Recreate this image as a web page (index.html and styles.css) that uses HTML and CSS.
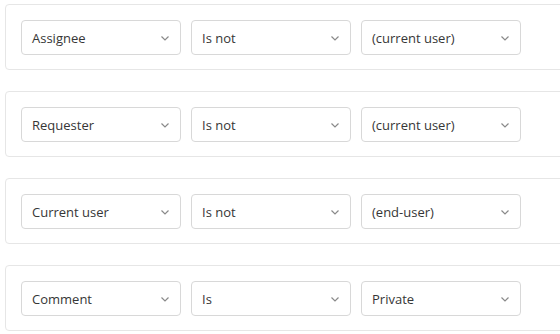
FILE: index.html
```html
<!DOCTYPE html>
<html>
<head>
<meta charset="utf-8">
<link rel="stylesheet" href="styles.css">
</head>
<body>
<div class="list">
  <div class="card">
    <div class="select"><span>Assignee</span><svg class="chev" width="8" height="5" viewBox="0 0 8 5"><path d="M0.5 0.5 L4 4 L7.5 0.5" fill="none" stroke="#8a8a8a" stroke-width="1.2"/></svg></div>
    <div class="select"><span>Is not</span><svg class="chev" width="8" height="5" viewBox="0 0 8 5"><path d="M0.5 0.5 L4 4 L7.5 0.5" fill="none" stroke="#8a8a8a" stroke-width="1.2"/></svg></div>
    <div class="select"><span>(current user)</span><svg class="chev" width="8" height="5" viewBox="0 0 8 5"><path d="M0.5 0.5 L4 4 L7.5 0.5" fill="none" stroke="#8a8a8a" stroke-width="1.2"/></svg></div>
  </div>
  <div class="card">
    <div class="select"><span>Requester</span><svg class="chev" width="8" height="5" viewBox="0 0 8 5"><path d="M0.5 0.5 L4 4 L7.5 0.5" fill="none" stroke="#8a8a8a" stroke-width="1.2"/></svg></div>
    <div class="select"><span>Is not</span><svg class="chev" width="8" height="5" viewBox="0 0 8 5"><path d="M0.5 0.5 L4 4 L7.5 0.5" fill="none" stroke="#8a8a8a" stroke-width="1.2"/></svg></div>
    <div class="select"><span>(current user)</span><svg class="chev" width="8" height="5" viewBox="0 0 8 5"><path d="M0.5 0.5 L4 4 L7.5 0.5" fill="none" stroke="#8a8a8a" stroke-width="1.2"/></svg></div>
  </div>
  <div class="card">
    <div class="select"><span>Current user</span><svg class="chev" width="8" height="5" viewBox="0 0 8 5"><path d="M0.5 0.5 L4 4 L7.5 0.5" fill="none" stroke="#8a8a8a" stroke-width="1.2"/></svg></div>
    <div class="select"><span>Is not</span><svg class="chev" width="8" height="5" viewBox="0 0 8 5"><path d="M0.5 0.5 L4 4 L7.5 0.5" fill="none" stroke="#8a8a8a" stroke-width="1.2"/></svg></div>
    <div class="select"><span>(end-user)</span><svg class="chev" width="8" height="5" viewBox="0 0 8 5"><path d="M0.5 0.5 L4 4 L7.5 0.5" fill="none" stroke="#8a8a8a" stroke-width="1.2"/></svg></div>
  </div>
  <div class="card">
    <div class="select"><span>Comment</span><svg class="chev" width="8" height="5" viewBox="0 0 8 5"><path d="M0.5 0.5 L4 4 L7.5 0.5" fill="none" stroke="#8a8a8a" stroke-width="1.2"/></svg></div>
    <div class="select"><span>Is</span><svg class="chev" width="8" height="5" viewBox="0 0 8 5"><path d="M0.5 0.5 L4 4 L7.5 0.5" fill="none" stroke="#8a8a8a" stroke-width="1.2"/></svg></div>
    <div class="select"><span>Private</span><svg class="chev" width="8" height="5" viewBox="0 0 8 5"><path d="M0.5 0.5 L4 4 L7.5 0.5" fill="none" stroke="#8a8a8a" stroke-width="1.2"/></svg></div>
  </div>
</div>
</body>
</html>
```
FILE: styles.css
```css
html, body {
  margin: 0;
  padding: 0;
  background: #fff;
  overflow: hidden;
}
body {
  width: 560px;
  font-family: "Open Sans", "Noto Sans", sans-serif;
  font-size: 13px;
  color: #363636;
}
.list {
  display: flex;
  flex-direction: column;
  gap: 21px;
  padding: 4px 0 0 5px;
  overflow: hidden;
}
.card {
  display: flex;
  gap: 10px;
  width: calc(100% + 20px);
  flex-shrink: 0;
  height: 66px;
  box-sizing: border-box;
  padding: 15px;
  border: 1px solid #e6e6e6;
  border-radius: 4px;
}
.select {
  display: flex;
  align-items: center;
  justify-content: space-between;
  width: 160px;
  height: 35px;
  box-sizing: border-box;
  padding: 0 11px 0 10px;
  border: 1px solid #d8d8d8;
  border-radius: 4px;
  background: #fff;
}
.chev {
  display: block;
  margin-top: 1px;
}
```
